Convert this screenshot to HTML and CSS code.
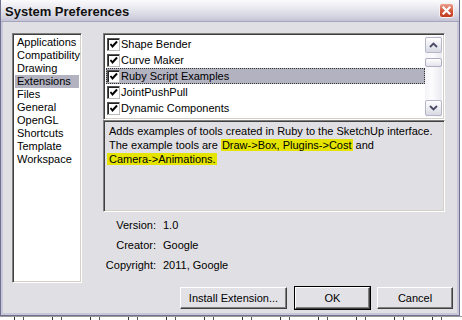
FILE: index.html
```html
<!DOCTYPE html>
<html lang="en">
<head>
    <meta charset="UTF-8">
    <title>System Preferences</title>
    <link rel="stylesheet" href="styles.css">
</head>
<body>
    <div class="window">
        <div class="titlebar">
            <span class="title">System Preferences</span>
            <span class="close">
                <svg width="15" height="15" viewBox="0 0 15 15">
                    <path d="M4.5 4.5 L10.5 10.5 M10.5 4.5 L4.5 10.5" stroke="#fff" stroke-width="2.2" stroke-linecap="square"/>
                </svg>
            </span>
        </div>
        <div class="body">
            <div class="main">
                <ul class="categories">
                    <li>Applications</li>
                    <li>Compatibility</li>
                    <li>Drawing</li>
                    <li class="selected">Extensions</li>
                    <li>Files</li>
                    <li>General</li>
                    <li>OpenGL</li>
                    <li>Shortcuts</li>
                    <li>Template</li>
                    <li>Workspace</li>
                </ul>
                <div class="details">
                    <div class="ext-list">
                        <ul class="ext-items">
                            <li><span class="check"></span>Shape Bender</li>
                            <li><span class="check"></span>Curve Maker</li>
                            <li class="selected"><span class="check"></span>Ruby Script Examples</li>
                            <li><span class="check"></span>JointPushPull</li>
                            <li><span class="check"></span>Dynamic Components</li>
                            <li><span class="check"></span>Sandbox Tools</li>
                        </ul>
                        <div class="scrollbar">
                            <div class="sb-btn">
                                <svg width="9" height="6" viewBox="0 0 9 6"><path d="M1 5 L4.5 1.5 L8 5" fill="none" stroke="#4a4a66" stroke-width="1.8"/></svg>
                            </div>
                            <div class="sb-track">
                                <div class="sb-thumb"></div>
                            </div>
                            <div class="sb-btn">
                                <svg width="9" height="6" viewBox="0 0 9 6"><path d="M1 1 L4.5 4.5 L8 1" fill="none" stroke="#4a4a66" stroke-width="1.8"/></svg>
                            </div>
                        </div>
                    </div>
                    <div class="description">
                        Adds examples of tools created in Ruby to the SketchUp interface.<br>
                        The example tools are <span class="mark">Draw-&gt;Box, Plugins-&gt;Cost</span> and<br>
                        <span class="mark first">Camera-&gt;Animations.</span>
                    </div>
                    <div class="info">
                        <span class="info-label">Version:</span><span>1.0</span>
                        <span class="info-label">Creator:</span><span>Google</span>
                        <span class="info-label">Copyright:</span><span>2011, Google</span>
                    </div>
                </div>
            </div>
            <div class="buttons">
                <button class="install">Install Extension...</button>
                <button class="ok">OK</button>
                <button class="cancel">Cancel</button>
            </div>
        </div>
    </div>
    <div class="under"></div>
</body>
</html>
```

FILE: styles.css
```css
body {
    margin: 0;
    background-color: #ffffff;
    font-family: "Liberation Sans", Arial, sans-serif;
    font-size: 11px;
    color: #000;
}

.window {
    width: 460px;
    height: 316px;
    box-sizing: border-box;
    display: flex;
    flex-direction: column;
    border: 1px solid #6f6f90;
    border-top: 0;
    background-color: #e0dfe3;
}

/* Title bar */
.titlebar {
    height: 22px;
    flex: none;
    display: flex;
    align-items: center;
    justify-content: space-between;
    padding: 0 4px 0 4px;
    background: linear-gradient(#fbfbfd, #ebebf1 35%, #d6d6e2 75%, #c4c3d6);
    border-bottom: 1px solid #a6a5bd;
    box-sizing: border-box;
}

.title {
    font-weight: bold;
    font-size: 13px;
    color: #111;
    padding-top: 1px;
}

.close {
    width: 15px;
    height: 15px;
    border-radius: 3px;
    border: 1px solid #f7f0ee;
    box-sizing: border-box;
    background: linear-gradient(#e9a18f, #d4553a 55%, #bf3a1e);
    display: flex;
    align-items: center;
    justify-content: center;
    margin-right: 1px;
}

.close svg {
    margin: -1px;
}

/* Body */
.body {
    flex: 1;
    border: 2px solid #c8c7d9;
    border-top: 0;
    padding: 11px 4px 0 9px;
    display: flex;
    flex-direction: column;
}

.main {
    display: grid;
    grid-template-columns: 70px 342px;
    column-gap: 21px;
}

.categories,
.ext-list,
.description {
    border: 1px solid;
    border-color: #808080 #ffffff #ffffff #808080;
    box-shadow: inset 1px 1px #404040, inset -1px -1px #d4d0c8;
    box-sizing: border-box;
}

.categories {
    height: 250px;
    margin: 0;
    padding: 2px;
    list-style: none;
    background-color: #fff;
}

.categories li {
    height: 13px;
    line-height: 13px;
    padding-left: 2px;
}

.categories li.selected {
    background-color: #b3b2c1;
}

/* Extension list */
.ext-list {
    height: 87px;
    padding: 2px;
    display: flex;
    background-color: #fff;
}

.ext-items {
    flex: 1;
    margin: 0;
    padding: 0;
    list-style: none;
    overflow: hidden;
}

.ext-items li {
    height: 16px;
    display: flex;
    align-items: center;
    box-sizing: border-box;
}

.ext-items li.selected {
    background-color: #b3b2c1;
    outline: 1px dotted #333;
    outline-offset: -1px;
}

.check {
    width: 13px;
    height: 13px;
    box-sizing: border-box;
    margin: 0 1px;
    border: 1px solid;
    border-color: #555 #bbb #bbb #555;
    box-shadow: inset 1px 1px #222;
    background: #fff url("data:image/svg+xml,%3Csvg xmlns='http://www.w3.org/2000/svg' width='11' height='11'%3E%3Cpath d='M2.5 5 L4.5 7.5 L9 2.5' fill='none' stroke='%23000' stroke-width='2'/%3E%3C/svg%3E") center no-repeat;
}

.scrollbar {
    width: 17px;
    display: flex;
    flex-direction: column;
    background: linear-gradient(90deg, #f4f4f8, #fdfdff 40%, #e9e9f0);
}

.sb-btn {
    height: 16px;
    margin: 1px 0;
    box-sizing: border-box;
    border: 1px solid #b7b6c9;
    border-radius: 2px;
    background: linear-gradient(#ffffff, #e8e8ef 60%, #d8d8e2);
    display: flex;
    align-items: center;
    justify-content: center;
}

.sb-track {
    flex: 1;
    padding-top: 4px;
}

.sb-thumb {
    height: 9px;
    box-sizing: border-box;
    border: 1px solid #aeadc2;
    border-radius: 2px;
    background: linear-gradient(#ffffff, #e2e2ea);
}

/* Description */
.description {
    height: 92px;
    padding: 3px 4px 0 5px;
    line-height: 14px;
    background-color: #e0dfe3;
    white-space: nowrap;
}

.mark {
    background-color: #e5e400;
    padding: 0 1px;
}

.mark.first {
    margin-left: -2px;
    padding-left: 2px;
}

/* Version info */
.info {
    margin-top: 3px;
    display: grid;
    grid-template-columns: 53px auto;
    column-gap: 7px;
    line-height: 20px;
}

.info-label {
    text-align: right;
}

/* Buttons */
.buttons {
    margin-top: 4px;
    display: flex;
    justify-content: flex-end;
    gap: 8px;
}

button {
    height: 22px;
    font-family: "Liberation Sans", Arial, sans-serif;
    font-size: 11px;
    color: #000;
    background-color: #e2e1e6;
    border: 1px solid;
    border-color: #ffffff #404040 #404040 #ffffff;
    box-shadow: inset -1px -1px #808080;
    padding: 0;
}

.install {
    width: 107px;
}

.ok {
    width: 75px;
    outline: 1px solid #000;
}

.cancel {
    width: 76px;
    margin-left: -1px;
}

.under {
    height: 4px;
    background: repeating-linear-gradient(90deg, #fff 0 14px, #333 14px 15px, #fff 15px 23px, #555 23px 24px, #fff 24px 38px);
    border-top: 1px solid #9a9a9a;
}
```
